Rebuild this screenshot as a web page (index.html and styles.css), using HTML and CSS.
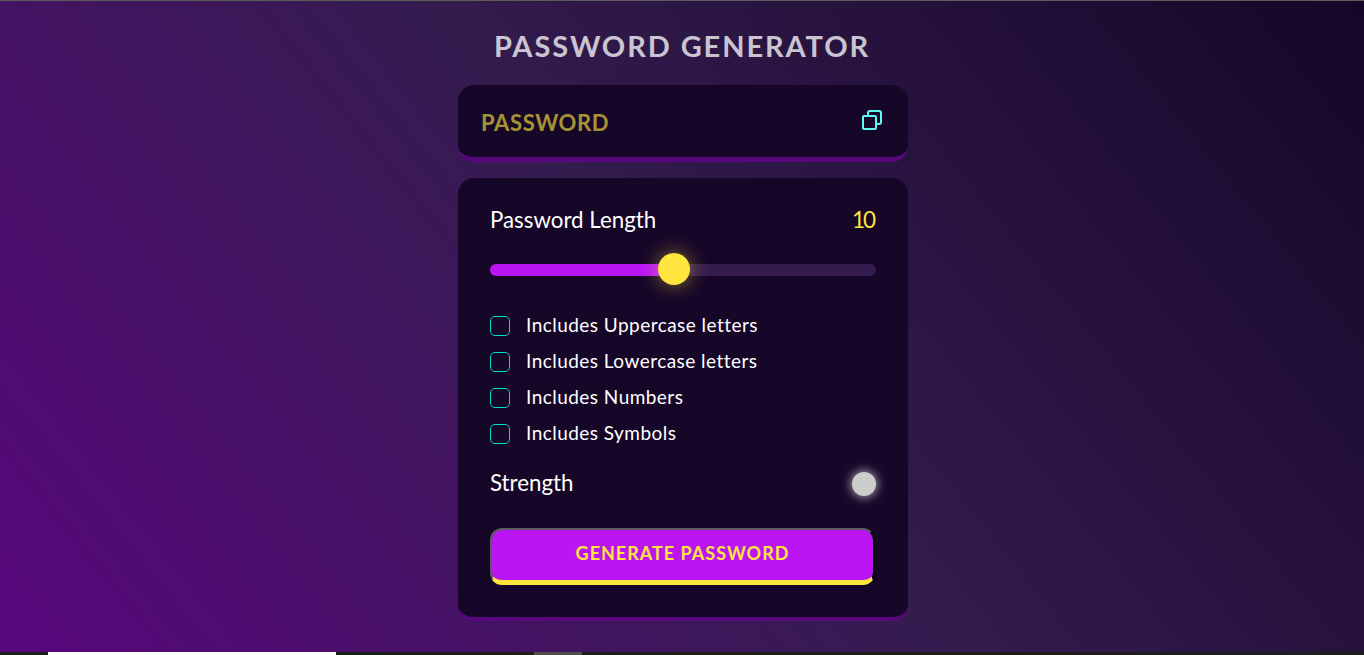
FILE: index.html
```html
<!DOCTYPE html>
<html lang="en">
<head>
<meta charset="utf-8">
<title>Password Generator</title>
<link rel="stylesheet" href="styles.css">
</head>
<body>
<div class="top-strip"></div>
<main class="page">
  <div class="container">
    <h1 class="title">Password Generator</h1>
    <div class="display-box">
      <span class="display">PASSWORD</span>
      <button class="copy-btn" type="button" aria-label="Copy">
        <svg width="20" height="20" viewBox="0 0 20 20" fill="none" stroke="#5ef9f2" stroke-width="2">
          <path d="M6 5V3a2 2 0 0 1 2-2h9a2 2 0 0 1 2 2v9a2 2 0 0 1-2 2h-2"/>
          <rect x="1" y="6" width="13" height="13" rx="1"/>
        </svg>
      </button>
    </div>
    <form class="panel">
      <div class="length-row">
        <span class="length-label">Password Length</span>
        <span class="length-value">10</span>
      </div>
      <input class="slider" type="range" min="1" max="20" value="10" step="1">
      <label class="check"><input type="checkbox"><span>Includes Uppercase letters</span></label>
      <label class="check"><input type="checkbox"><span>Includes Lowercase letters</span></label>
      <label class="check"><input type="checkbox"><span>Includes Numbers</span></label>
      <label class="check"><input type="checkbox"><span>Includes Symbols</span></label>
      <div class="strength-row">
        <span class="strength-label">Strength</span>
        <span class="indicator"></span>
      </div>
      <button class="generate" type="button">Generate Password</button>
    </form>
  </div>
</main>
<div class="bottom-strip">
  <span class="tab-white"></span>
  <span class="tab-gray"></span>
</div>
</body>
</html>
```
FILE: styles.css
```css
* { box-sizing: border-box; margin: 0; padding: 0; }
html, body { height: 100%; }
body {
  display: flex;
  flex-direction: column;
  overflow: hidden;
  font-family: "Lato", "Liberation Sans", sans-serif;
  color: #fff;
}
.top-strip { height: 1px; flex: none; background: #5c5c58; }
.page {
  flex: 1;
  min-height: 0;
  display: flex;
  justify-content: center;
  padding-left: 2px;
  background: linear-gradient(231deg, #160628 0%, #341c4f 50%, #58077d 100%);
}
.container { width: 450px; padding-top: 29px; }
.title {
  height: 32px;
  line-height: 32px;
  padding-right: 2px;
  text-align: center;
  font-size: 29px;
  font-weight: 700;
  letter-spacing: 1.9px;
  text-transform: uppercase;
  color: rgba(255, 255, 255, 0.75);
}
.display-box {
  margin-top: 23px;
  height: 77px;
  padding: 0 26px 0 23px;
  display: flex;
  align-items: center;
  justify-content: space-between;
  background: #160628;
  border-radius: 16px;
  border-bottom: 5px solid #58077d;
}
.display {
  font-size: 22px;
  font-weight: 700;
  letter-spacing: 0.6px;
  padding-top: 2px;
  color: rgba(255, 229, 61, 0.65);
}
.copy-btn { display: flex; background: none; border: 0; margin-top: -3px; }
.panel {
  margin-top: 16px;
  height: 443px;
  padding: 24px 32px 0;
  background: #160628;
  border-radius: 16px;
  border-bottom: 4px solid #58077d;
}
.length-row, .strength-row {
  display: flex;
  align-items: center;
  justify-content: space-between;
}
.length-row { height: 36px; padding-bottom: 2px; }
.length-label, .strength-label { font-size: 22.3px; }
.strength-label { padding-bottom: 4px; }
.length-value { font-size: 22.5px; letter-spacing: -2px; padding-right: 2px; color: #ffe53d; }
.slider {
  display: block;
  -webkit-appearance: none;
  appearance: none;
  width: 386px;
  height: 12px;
  margin: 26px 0 40px;
  border: 0;
  border-radius: 12px;
  outline: 0;
  background: linear-gradient(#bc15f4, #bc15f4) 0 0 / 47.37% 100% no-repeat #341c4f;
}
.slider::-webkit-slider-thumb {
  -webkit-appearance: none;
  appearance: none;
  width: 32px;
  height: 32px;
  margin-top: -2px;
  border-radius: 50%;
  background: #ffe53d;
  box-shadow: 0 0 20px rgba(255, 229, 61, 0.5);
}
.check {
  display: flex;
  align-items: center;
  gap: 16px;
  height: 20px;
  margin-bottom: 16px;
  font-size: 19px;
  letter-spacing: 0.46px;
}
.check span { padding-bottom: 4px; }
.check input {
  -webkit-appearance: none;
  appearance: none;
  flex: none;
  width: 20px;
  height: 20px;
  border: 1px solid #00e0d1;
  border-radius: 5px;
}
.strength-row { margin-top: 28px; height: 24px; }
.indicator {
  width: 24px;
  height: 24px;
  border-radius: 50%;
  background: #ccc;
  box-shadow: 0 0 12px rgba(255, 255, 255, 0.8);
}
.generate {
  display: block;
  width: 385px;
  height: 57px;
  margin-top: 32px;
  padding-bottom: 4px;
  font: 700 18px "Lato", "Liberation Sans", sans-serif;
  letter-spacing: 1px;
  text-transform: uppercase;
  color: #ffe53d;
  background: #bc15f4;
  border-width: 2px 2px 5px;
  border-style: solid;
  border-color: #5c5c5c #000 #ffe53d #5c5c5c;
  border-radius: 12px;
}
.bottom-strip {
  height: 3px;
  flex: none;
  display: flex;
  background: #1d1d1b;
}
.tab-white { width: 288px; margin-left: 48px; background: #fff; }
.tab-gray { width: 48px; margin-left: 198px; background: #4d4d4d; }
```
